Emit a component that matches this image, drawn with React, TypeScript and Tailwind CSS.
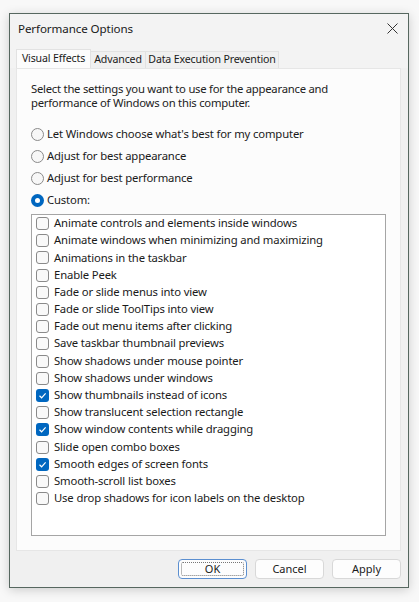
import React from 'react';

const effects = [
  { label: 'Animate controls and elements inside windows', checked: false },
  { label: 'Animate windows when minimizing and maximizing', checked: false },
  { label: 'Animations in the taskbar', checked: false },
  { label: 'Enable Peek', checked: false },
  { label: 'Fade or slide menus into view', checked: false },
  { label: 'Fade or slide ToolTips into view', checked: false },
  { label: 'Fade out menu items after clicking', checked: false },
  { label: 'Save taskbar thumbnail previews', checked: false },
  { label: 'Show shadows under mouse pointer', checked: false },
  { label: 'Show shadows under windows', checked: false },
  { label: 'Show thumbnails instead of icons', checked: true },
  { label: 'Show translucent selection rectangle', checked: false },
  { label: 'Show window contents while dragging', checked: true },
  { label: 'Slide open combo boxes', checked: false },
  { label: 'Smooth edges of screen fonts', checked: true },
  { label: 'Smooth-scroll list boxes', checked: false },
  { label: 'Use drop shadows for icon labels on the desktop', checked: false },
];

const radios = [
  { label: "Let Windows choose what's best for my computer", selected: false },
  { label: 'Adjust for best appearance', selected: false },
  { label: 'Adjust for best performance', selected: false },
  { label: 'Custom:', selected: true },
];

const Radio = ({ selected }: { selected: boolean }) =>
  selected ? (
    <span className="w-[13px] h-[13px] rounded-full bg-[#0067c0] flex items-center justify-center shrink-0">
      <span className="w-[5px] h-[5px] rounded-full bg-white" />
    </span>
  ) : (
    <span className="w-[13px] h-[13px] rounded-full border border-[#8a8a8a] bg-[#f7f7f7] shrink-0" />
  );

const Check = ({ checked }: { checked: boolean }) =>
  checked ? (
    <span className="w-[13px] h-[13px] rounded-[3px] bg-[#0067c0] flex items-center justify-center shrink-0">
      <svg width="9" height="9" viewBox="0 0 9 9">
        <path d="M1.5 4.8 L3.6 6.8 L7.6 2.4" fill="none" stroke="white" strokeWidth="1.2" />
      </svg>
    </span>
  ) : (
    <span className="w-[13px] h-[13px] rounded-[3px] border border-[#8a8a8a] bg-[#f9f9f9] shrink-0" />
  );

export default function App() {
  return (
    <div
      className="w-[419px] h-[602px] bg-[#f8f8f8] pt-[13px] pl-[9px] text-[11.3px] text-[#1a1a1a]"
      style={{ fontFamily: '"Noto Sans", "Open Sans", sans-serif' }}
    >
      <div className="w-[400px] h-[575px] border border-[#56675f] bg-[#f0f0f0] flex flex-col shadow-[0_2px_10px_rgba(0,0,0,0.18)]">
        {/* title bar */}
        <div className="h-[29px] bg-[#f3f3f3] flex items-center justify-between pl-[8px] pr-[10px]">
          <span className="text-[11.6px] text-[#1a1a1a] tracking-[-0.1px]">Performance Options</span>
          <svg width="11" height="11" viewBox="0 0 11 11">
            <path d="M0.5 0.5 L10.5 10.5 M10.5 0.5 L0.5 10.5" stroke="#333" strokeWidth="1" />
          </svg>
        </div>

        {/* tabs */}
        <div className="bg-[#f3f3f3] pt-[6px] pl-[6px] flex items-end text-[10.6px] tracking-[-0.15px]">
          <div className="h-[19px] w-[75px] bg-[#fcfcfc] border border-b-0 border-[#e2e2e2] flex items-center justify-center">
            Visual Effects
          </div>
          <div className="h-[17px] w-[55px] bg-[#f0f0f0] border border-b-0 border-l-0 border-[#e2e2e2] flex items-center justify-center">
            Advanced
          </div>
          <div className="h-[17px] w-[133px] bg-[#f0f0f0] border border-b-0 border-l-0 border-[#e2e2e2] flex items-center justify-center">
            Data Execution Prevention
          </div>
        </div>

        {/* panel */}
        <div className="ml-[6px] mr-[7px] h-[483px] bg-[#fcfcfc] border border-[#e6e6e6] px-[14px] pt-[13px] flex flex-col">
          <p className="leading-[14px] text-[#222] tracking-[-0.25px]">
            Select the settings you want to use for the appearance and
            <br />
            performance of Windows on this computer.
          </p>

          <div className="mt-[13px] flex flex-col">
            {radios.map((r) => (
              <div key={r.label} className="h-[22px] flex items-center gap-[3px] tracking-[-0.15px]">
                <Radio selected={r.selected} />
                <span>{r.label}</span>
              </div>
            ))}
          </div>

          <div className="mt-[3px] h-[322px] bg-white border border-[#a5a5a5] px-[4px] flex flex-col">
            {effects.map((e) => (
              <div key={e.label} className="h-[17.2px] flex items-center gap-[5px] tracking-[-0.15px]">
                <Check checked={e.checked} />
                <span className="whitespace-nowrap">{e.label}</span>
              </div>
            ))}
          </div>
        </div>

        {/* buttons */}
        <div className="flex justify-end gap-[8px] pr-[7px] pt-[8px] text-[11px]">
          <button className="w-[69px] h-[20px] rounded-[4px] border border-[#5b8fd0] bg-[#fdfdfd] flex items-center justify-center p-[2px]">
            <span className="w-full h-full border border-dotted border-[#777] rounded-[2px] flex items-center justify-center">
              OK
            </span>
          </button>
          <button className="w-[69px] h-[20px] rounded-[4px] border border-[#d8d8d8] bg-[#fdfdfd] flex items-center justify-center">
            Cancel
          </button>
          <button className="w-[69px] h-[20px] rounded-[4px] border border-[#d8d8d8] bg-[#fdfdfd] flex items-center justify-center">
            Apply
          </button>
        </div>
      </div>
    </div>
  );
}
